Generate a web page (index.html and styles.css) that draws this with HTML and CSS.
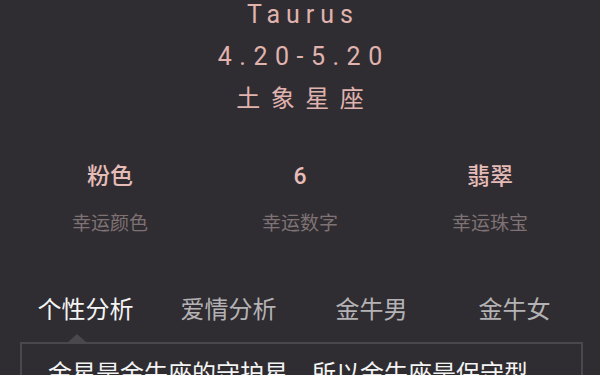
FILE: index.html
```html
<!DOCTYPE html>
<html lang="zh-CN">
<head>
    <meta charset="UTF-8">
    <meta name="viewport" content="width=device-width, initial-scale=1.0">
    <title>金牛座</title>
    <link rel="stylesheet" href="styles.css">
</head>
<body>
    <div class="page">
        <div class="sign">
            <div class="sign-name">Taurus</div>
            <div class="sign-date">4.20-5.20</div>
            <div class="sign-type">土象星座</div>
        </div>

        <div class="lucky">
            <div class="lucky-item">
                <div class="lucky-value">粉色</div>
                <div class="lucky-label">幸运颜色</div>
            </div>
            <div class="lucky-item">
                <div class="lucky-value">6</div>
                <div class="lucky-label">幸运数字</div>
            </div>
            <div class="lucky-item">
                <div class="lucky-value">翡翠</div>
                <div class="lucky-label">幸运珠宝</div>
            </div>
        </div>

        <div class="tabs">
            <div class="tab active">个性分析</div>
            <div class="tab">爱情分析</div>
            <div class="tab">金牛男</div>
            <div class="tab">金牛女</div>
        </div>

        <div class="panel">
            <span class="panel-arrow"></span>
            <p class="panel-text">金星是金牛座的守护星，所以金牛座是保守型</p>
        </div>
    </div>
</body>
</html>
```

FILE: styles.css
```css
body {
    margin: 0;
    padding: 0;
    background-color: #2f2d31;
    font-family: Roboto, "Noto Sans CJK SC", sans-serif;
    overflow: hidden;
}

.page {
    width: 600px;
    height: 375px;
    overflow: hidden;
}

.sign {
    margin-top: -6px;
    text-align: center;
    color: #e0b3ae;
    font-size: 25px;
    line-height: 42px;
}

.sign-name {
    letter-spacing: 6px;
    padding-left: 6px;
}

.sign-date {
    letter-spacing: 7.5px;
    padding-left: 7.5px;
}

.sign-type {
    font-size: 24px;
    letter-spacing: 10.5px;
    padding-left: 10.5px;
}

.lucky {
    display: flex;
    padding: 0 15px;
    margin-top: 42px;
}

.lucky-item {
    flex: 1;
    text-align: center;
}

.lucky-value {
    color: #e6bcb8;
    font-size: 23px;
    font-weight: 500;
    line-height: 30px;
}

.lucky-label {
    color: #7f7275;
    font-size: 19px;
    line-height: 30px;
    margin-top: 17px;
}

.tabs {
    display: flex;
    padding: 0 14px;
    margin-top: 55px;
}

.tab {
    flex: 1;
    text-align: center;
    color: #b4b2b5;
    font-size: 24px;
    line-height: 32px;
}

.tab.active {
    color: #f4f4f4;
}

.panel {
    position: relative;
    margin: 16px 17px 0 20px;
    border: 2px solid #4a484c;
    border-bottom: none;
    padding: 0 26px;
}

.panel-arrow {
    position: absolute;
    left: 46px;
    top: -10px;
    width: 0;
    height: 0;
    border-left: 9px solid transparent;
    border-right: 9px solid transparent;
    border-bottom: 8px solid #4a484c;
}

.panel-text {
    margin: 13px 0 0;
    color: #f4f4f4;
    font-size: 24px;
    line-height: 34px;
    white-space: nowrap;
}
```
